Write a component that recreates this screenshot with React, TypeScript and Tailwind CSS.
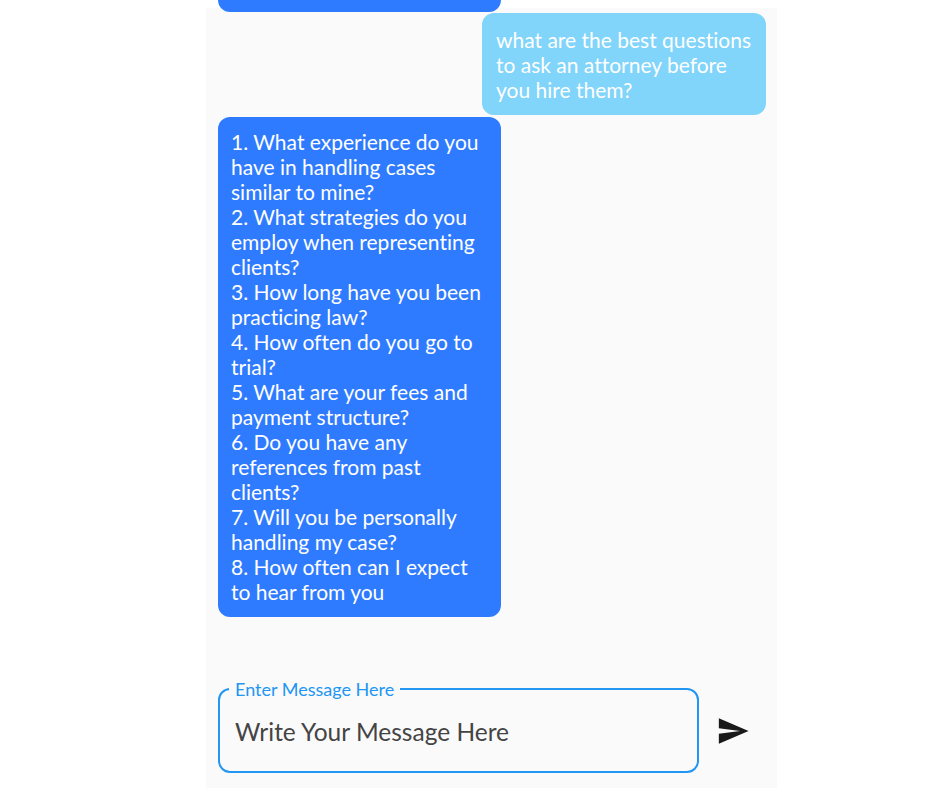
import React, { useState } from 'react';

const questions = [
    '1. What experience do you have in handling cases similar to mine?',
    '2. What strategies do you employ when representing clients?',
    '3. How long have you been practicing law?',
    '4. How often do you go to trial?',
    '5. What are your fees and payment structure?',
    '6. Do you have any references from past clients?',
    '7. Will you be personally handling my case?',
    '8. How often can I expect to hear from you',
];

const SendIcon: React.FC = () => (
    <svg viewBox="0 0 24 24" className="w-[34px] h-[34px]" fill="#1a1a1a">
        <path d="M2.01 21L23 12 2.01 3 2 10l15 2-15 2z" />
    </svg>
);

const App: React.FC = () => {
    const [message, setMessage] = useState('');

    return (
        <div className="w-[940px] h-[788px] bg-white overflow-hidden [font-variant-ligatures:none]" style={{ fontFamily: 'Lato, "Noto Sans", sans-serif' }}>
            <div className="ml-[206px] mt-2 w-[571px] h-[780px] bg-[#fafafa] flex flex-col">
                <div className="flex-1 flex flex-col px-3">
                    {/* previous bot reply, scrolled mostly out of view */}
                    <div className="-mt-[36px] h-[40px] w-[283px] rounded-xl bg-[#2f7bff]" />

                    <div className="self-end mt-px -mr-px w-[284px] rounded-xl bg-[#81d4fa] px-3.5 pt-[14px] pb-[13px] text-[21px] leading-[25px] text-white">
                        what are the best questions to ask an attorney before you hire them?
                    </div>

                    <div className="mt-0.5 w-[283px] rounded-xl bg-[#2f7bff] pl-[13px] pr-3 pt-3 pb-[13px] text-[21px] leading-[25px] text-white">
                        {questions.map(q => (
                            <div key={q}>{q}</div>
                        ))}
                    </div>
                </div>

                <div className="flex items-center pl-3 pb-[15px]">
                    <fieldset className="w-[481px] border-[2.5px] border-[#2196f3] rounded-xl pl-[9px] pr-3 pb-2.5">
                        <legend className="px-1.5 text-[18px] leading-[20px] text-[#2196f3]">Enter Message Here</legend>
                        <input
                            type="text"
                            value={message}
                            onChange={e => setMessage(e.target.value)}
                            placeholder="Write Your Message Here"
                            className="w-full h-[60px] mt-0.5 pl-1.5 bg-transparent outline-none text-[24.5px] text-[#333] placeholder:text-[#444]"
                        />
                    </fieldset>
                    <button type="button" className="ml-[17px] pt-2.5 flex items-center justify-center">
                        <SendIcon />
                    </button>
                </div>
            </div>
        </div>
    );
};

export default App;
